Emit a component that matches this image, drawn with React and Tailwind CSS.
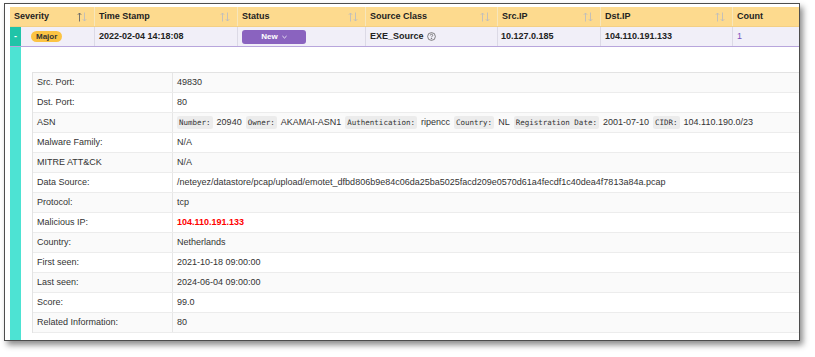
import React from "react";

const cols = [
  { label: "Severity", w: "w-[84px]", active: true },
  { label: "Time Stamp", w: "w-[143px]" },
  { label: "Status", w: "w-[128px]" },
  { label: "Source Class", w: "w-[132px]" },
  { label: "Src.IP", w: "w-[103px]" },
  { label: "Dst.IP", w: "w-[132px]" },
  { label: "Count", w: "w-[68px]", nosort: true },
];

function SortIcon({ active }) {
  const up = active ? "#666" : "#bdbdbd";
  const down = "#bdbdbd";
  return (
    <svg width="10" height="10" viewBox="0 0 10 10" fill="none" strokeWidth="0.9">
      <path d="M2.5 9.5 V1 M0.8 2.8 L2.5 1 L4.2 2.8" stroke={up} />
      <path d="M7.5 0.5 V9 M5.8 7.2 L7.5 9 L9.2 7.2" stroke={down} />
    </svg>
  );
}

function Chip({ children }) {
  return (
    <span className="bg-[#ececec] px-[2px] py-[1px] rounded-[2px] text-[7.5px] text-[#333] font-['DejaVu_Sans_Mono',monospace]">
      {children}
    </span>
  );
}

const rows = [
  ["Src. Port:", "49830"],
  ["Dst. Port:", "80"],
  ["ASN", "asn"],
  ["Malware Family:", "N/A"],
  ["MITRE ATT&CK", "N/A"],
  ["Data Source:", "/neteyez/datastore/pcap/upload/emotet_dfbd806b9e84c06da25ba5025facd209e0570d61a4fecdf1c40dea4f7813a84a.pcap"],
  ["Protocol:", "tcp"],
  ["Malicious IP:", "mal"],
  ["Country:", "Netherlands"],
  ["First seen:", "2021-10-18 09:00:00"],
  ["Last seen:", "2024-06-04 09:00:00"],
  ["Score:", "99.0"],
  ["Related Information:", "80"],
];

function Value({ v }) {
  if (v === "asn") {
    return (
      <span className="flex items-center gap-[4px] whitespace-nowrap">
        <Chip>Number:</Chip>
        <span>20940</span>
        <Chip>Owner:</Chip>
        <span>AKAMAI-ASN1</span>
        <Chip>Authentication:</Chip>
        <span>ripencc</span>
        <Chip>Country:</Chip>
        <span>NL</span>
        <Chip>Registration Date:</Chip>
        <span>2001-07-10</span>
        <Chip>CIDR:</Chip>
        <span>104.110.190.0/23</span>
      </span>
    );
  }
  if (v === "mal") {
    return <span className="font-bold text-[#ff0000]">104.110.191.133</span>;
  }
  return <span className="whitespace-nowrap">{v}</span>;
}

export default function App() {
  return (
    <div className="w-[815px] h-[357px] bg-white pt-[3px] pl-[4px] font-['Liberation_Sans',Arial,sans-serif] text-[9px] text-[#222]">
      <div className="w-[796px] h-[338px] border border-[#4d4d4d] bg-white shadow-[3px_4px_6px_rgba(0,0,0,0.45)] overflow-hidden pt-[3px] pl-[5px]">
        {/* header */}
        <div className="flex h-[20px] bg-[#fdda8e] border-b border-[#f3cf85]">
          {cols.map((c, i) => (
            <div
              key={c.label}
              className={`${c.w} shrink-0 flex items-center justify-between pl-[4px] pr-[7px] font-bold text-[#222] ${i > 0 ? "border-l border-[#f7e6bb]" : ""}`}
            >
              <span>{c.label}</span>
              {!c.nosort && <SortIcon active={c.active} />}
            </div>
          ))}
        </div>
        {/* data row */}
        <div className="flex h-[20px] bg-[#f1eff8] border-b border-[#b8a5dc] font-bold">
          <div className="w-[84px] shrink-0 flex items-stretch">
            <div className="w-[11px] bg-[#20c4a8] flex items-center justify-center text-white text-[9px]">-</div>
            <div className="flex items-center pl-[10px]">
              <span className="bg-[#fbc343] rounded-full h-[11px] px-[5px] flex items-center text-[8px] text-[#333]">Major</span>
            </div>
          </div>
          <div className="w-[143px] shrink-0 flex items-center pl-[4px] border-l border-[#dcdae6]">2022-02-04 14:18:08</div>
          <div className="w-[128px] shrink-0 flex items-center pl-[4px] border-l border-[#dcdae6]">
            <span className="w-[64px] h-[14px] bg-[#8a63bf] rounded-[3px] flex items-center justify-center gap-[4px] text-white text-[8px]">
              New
              <svg width="5" height="4" viewBox="0 0 6 4" fill="none" stroke="white" strokeWidth="1">
                <path d="M0.5 0.8 L3 3.2 L5.5 0.8" />
              </svg>
            </span>
          </div>
          <div className="w-[132px] shrink-0 flex items-center gap-[3px] pl-[4px] border-l border-[#dcdae6]">
            EXE_Source
            <svg width="9" height="9" viewBox="0 0 10 10" fill="none" stroke="#555" strokeWidth="0.8">
              <circle cx="5" cy="5" r="4.3" />
              <path d="M3.6 3.9 C3.6 2.9 4.3 2.5 5 2.5 C5.8 2.5 6.4 3 6.4 3.7 C6.4 4.6 5 4.7 5 5.8" />
              <circle cx="5" cy="7.3" r="0.35" fill="#555" />
            </svg>
          </div>
          <div className="w-[103px] shrink-0 flex items-center pl-[3px] border-l border-[#dcdae6]">10.127.0.185</div>
          <div className="w-[132px] shrink-0 flex items-center pl-[4px] border-l border-[#dcdae6]">104.110.191.133</div>
          <div className="w-[68px] shrink-0 flex items-center pl-[4px] border-l border-[#dcdae6] text-[#7a52c0] font-normal">1</div>
        </div>
        {/* expanded */}
        <div className="flex h-[300px]">
          <div className="w-[11px] shrink-0 bg-[#4de3d3]" />
          <div className="flex-1 pl-[11px] pt-[25px]">
            <div className="border-l border-t border-[#e3e3e3]">
              {rows.map(([k, v], i) => (
                <div
                  key={k}
                  className={`flex h-[20px] border-b border-[#ececec] ${i % 2 === 0 ? "bg-[#fafafa]" : "bg-white"}`}
                >
                  <div className="w-[140px] shrink-0 flex items-center pl-[4px] border-r border-[#e6e6e6] text-[#333]">{k}</div>
                  <div className="flex-1 flex items-center pl-[4px] text-[#333]">
                    <Value v={v} />
                  </div>
                </div>
              ))}
            </div>
          </div>
        </div>
      </div>
    </div>
  );
}
